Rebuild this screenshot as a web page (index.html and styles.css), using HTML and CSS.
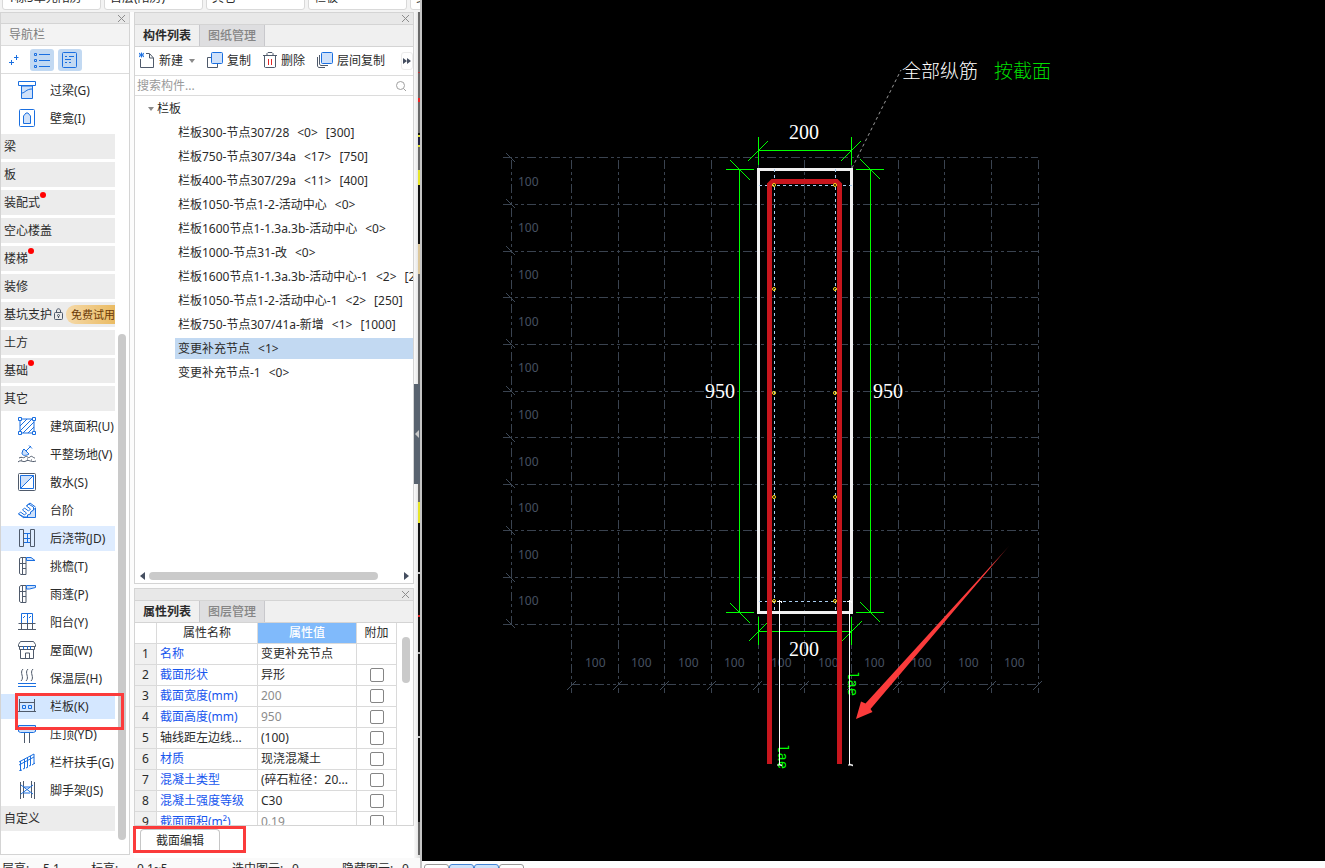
FILE: index.html
```
<!DOCTYPE html>
<html lang="zh-CN">
<head>
<meta charset="utf-8">
<title>栏板 - 截面编辑</title>
<link rel="stylesheet" href="styles.css">
</head>
<body>
<div class="app">
  <div class="side">
    <div class="topbar">
      <select class="pick" aria-label="单元"><option>1栋5单元阳房</option></select>
      <select class="pick" aria-label="楼层"><option>首层(阳房)</option></select>
      <select class="pick" aria-label="类别"><option>其它</option></select>
      <select class="pick" aria-label="构件类型"><option>栏板</option></select>
      <select class="pick" aria-label="构件"><option>变更补充节点</option></select>
    </div>
    <div class="panels">
      <nav class="panel nav">
        <div class="grip"><button class="close" aria-label="关闭"><svg width="9" height="9"><path d="M1 1l7 7M8 1l-7 7"/></svg></button></div>
        <h2 class="nav-title">导航栏</h2>
        <div class="nav-tools">
          <button class="tool plain" aria-label="添加"><svg width="18" height="18" class="b"><path d="M9 11.500H4M6.500 9v5M13.500 6.500H9M11.500 4v5"/></svg></button>
          <button class="tool on" aria-label="列表"><svg width="18" height="18" class="b"><path d="M6 3.500h11M6 9.500h11M6 15.500h11"/><path d="M1.500 2.500h2v2h-2zM1.500 8.500h2v2h-2zM1.500 14.500h2v2h-2z"/></svg></button>
          <button class="tool on" aria-label="卡片"><svg width="18" height="18" class="b"><rect x="1.500" y="1.500" width="14" height="15" rx="1"/><path d="M4 5.500h2M8 5.500h5M4 8.500h6M4 11.500h2M8 11.500h2"/></svg></button>
        </div>
        <div class="nav-body">
          <ul class="nav-list">
            <li class="item"><svg class="ico b" viewBox="0 0 18 18"><path class="f" d="M3.500 5v12.500h11V5z"/><path class="w" d="M.5.500h17v4H.5z"/><path d="M4 12c3 0 4-4 10-4"/></svg>过梁(G)</li>
            <li class="item"><svg class="ico b" viewBox="0 0 18 18"><rect x="1.500" y=".5" width="15" height="17" rx="1"/><path class="f" d="M5.500 14.500V7L8 4h2l2.500 3v7.500z"/></svg>壁龛(I)</li>
            <li class="group">梁</li>
            <li class="group">板</li>
            <li class="group">装配式<i class="dot"></i></li>
            <li class="group">空心楼盖</li>
            <li class="group">楼梯<i class="dot"></i></li>
            <li class="group">装修</li>
            <li class="group">基坑支护<svg class="lock" width="13" height="13" viewBox="0 0 13 13"><rect x="2.500" y="4.500" width="8" height="7" rx="1"/><path d="M4.500 4.500V3c0-3 4-3 4 0v1.500M6.500 8v2"/><circle cx="6.500" cy="7.500" r="1"/></svg><span class="trial">免费试用</span></li>
            <li class="group">土方</li>
            <li class="group">基础<i class="dot"></i></li>
            <li class="group">其它</li>
            <li class="item"><svg class="ico b" viewBox="0 0 18 18"><path d="M2 2h14v14H2zM2 9l7-7M2 14L14 2M5 16L16 5M10 16l6-6"/><path class="w" d="M.5.500h3v3h-3zM14.500.500h3v3h-3zM.5 14.500h3v3h-3zM14.500 14.500h3v3h-3z"/></svg>建筑面积(U)</li>
            <li class="item"><svg class="ico" viewBox="0 0 18 18"><path class="b f" d="M5 5L4 8c0 3 4 3 7 1L6 4z"/><path class="b" d="M8 6l5-5M11 .5l3 3"/><path class="g" d="M1 13c3-2 4 1 6-1s3 2 5 0 3 1 5 1M0 17c3-3 5 1 8-1s5 2 10 0M3 15h1M9 14h1M13 15h1"/></svg>平整场地(V)</li>
            <li class="item"><svg class="ico" viewBox="0 0 18 18"><rect class="g" x=".5" y=".5" width="17" height="17" rx="1"/><path class="b f" d="M2.500 15.500v-13h13z"/><path class="b w" d="M2.500 15.500h13v-13z"/></svg>散水(S)</li>
            <li class="item"><svg class="ico b" viewBox="0 0 18 18"><path class="f" d="M6 16.500h11.500V7L13 11h-2l-1 3H7z"/><path class="w" d="M.5 13l2-2 4 3 2-2-4-3 2-2 4 3 2-2-4-3 2-2 5 3v3l-3 2v2l-3 1v2H6z"/><path d="M.5 13L6 17M8.500 5L12 2l5.500 4"/></svg>台阶</li>
            <li class="item hover"><svg class="ico" viewBox="0 0 18 18"><path class="g" d="M1.500.500h4v17h-4zM12.500.500h4v17h-4z"/><path class="b" d="M6 4.500h6M6 9.500h6M6 13.500h6M9.500 4v10"/></svg>后浇带(JD)</li>
            <li class="item"><svg class="ico" viewBox="0 0 18 18"><path class="g" d="M1.500 1.500L3 .5h5v17H3l-1.500-1zM4.500 1v16M1.500 6.500H8M4.500 11.500H8"/><path class="b f" d="M8.500.500H13l4 3H8.500z"/></svg>挑檐(T)</li>
            <li class="item"><svg class="ico" viewBox="0 0 18 18"><path class="g" d="M1.500 1.500L3 .5h5v17H3l-1.500-1zM4.500 1v16M1.500 6.500H8M4.500 11.500H8"/><path class="b f" d="M8.500.500h9v2l-6 1.500h-3z"/></svg>雨蓬(P)</li>
            <li class="item"><svg class="ico" viewBox="0 0 18 18"><path class="b" d="M3.500 10V.500h11V10M9.500.500V10M5 5l2-2M11 5l2-2"/><path class="g" d="M.5 10.500h17M3.500 11v6M9.500 11v6M14.500 11v6M0 16.500h18"/></svg>阳台(Y)</li>
            <li class="item"><svg class="ico" viewBox="0 0 18 18"><path class="g" d="M2.500.500h13l2 3v2h-17v-2zM1.500 6v2.500h15V6M2.500 9v8.500h13V9M7.500 17v-5h4v5"/><path class="b" d="M5.500 5v3M9.500 5v3M12.500 5v3"/></svg>屋面(W)</li>
            <li class="item"><svg class="ico" viewBox="0 0 18 18"><path class="g" d="M5 0C1 4 7 8 3 12M10 0C6 4 12 8 8 12M15 0c-4 4 2 8-2 12"/><path class="b" d="M0 14.500h18M0 17.500h18"/></svg>保温层(H)</li>
            <li class="item current"><svg class="ico" viewBox="0 0 18 18"><path class="g" d="M1.500 2v12M16.500 2v12M2 5.500h14M0 14.500h18"/><path class="b" d="M4.500 8.500h3v3h-3zM10.500 8.500h3v3h-3z"/></svg>栏板(K)</li>
            <li class="item"><svg class="ico" viewBox="0 0 18 18"><path class="g" d="M6.500 8v10M11.500 8v10"/><path class="b f" d="M.5.500h17v6l-2 1h-13l-2-1z"/></svg>压顶(YD)</li>
            <li class="item"><svg class="ico b" viewBox="0 0 18 18"><path d="M1 9L16 1v10M1 12L16 4M2.500 8v10M6.500 6v9M9.500 5v9M12.500 3v9M1 18l3-1M5 16l2-1M8 15l2-1M11 13l2-1M14 12l3-2"/></svg>栏杆扶手(G)</li>
            <li class="item"><svg class="ico" viewBox="0 0 18 18"><path class="g" d="M2.500 1v17M5.500 0v17M13.500 0v17M16.500 1v17"/><path class="b" d="M3 4l12 9M3 13l12-9M6 6h6M6 12h6"/></svg>脚手架(JS)</li>
            <li class="group">自定义</li>
          </ul>
          <div class="nav-scroll"></div>
        </div>
        <div class="mark mark-nav"></div>
      </nav>

      <div class="stack">
        <section class="panel comps">
          <div class="grip"><button class="close" aria-label="关闭"><svg width="9" height="9"><path d="M1 1l7 7M8 1l-7 7"/></svg></button></div>
          <div class="tabs"><button class="tab active">构件列表</button><button class="tab">图纸管理</button></div>
          <div class="toolbar">
            <button class="act"><svg width="16" height="16"><path class="g" d="M1.500 7v8.500h13V6l-4-4.500H7M10.500 2v4h4"/><path class="b" d="M0 1l5 4M5 1L0 5M2.500 .500v5M0 3h5"/></svg>新建<span class="caret"></span></button>
            <button class="act"><svg width="16" height="16"><path class="g" d="M4 5.500H.5v10h10V12"/><rect class="b f" x="4.500" y=".5" width="11" height="11" rx="1"/></svg>复制</button>
            <button class="act"><svg width="14" height="16"><path class="g" d="M0 3.500h14M4 3V1.500L5 .5h4l1 1V3M1.500 4v11l1 .5h9l1-.5V4"/><path class="r" d="M5.500 7v6M8.500 7v6"/></svg>删除</button>
            <button class="act"><svg width="16" height="16"><path class="g" d="M.5 5v9l1 1.500H8M2.500 3v9l1 1.500H11"/><rect class="b f" x="4.500" y=".5" width="11" height="11" rx="1"/></svg>层间复制</button>
            <button class="more" aria-label="更多"><svg width="8" height="6"><path d="M0 0l4 3-4 3zM4 0l4 3-4 3z"/></svg></button>
          </div>
          <div class="search"><input type="text" placeholder="搜索构件..." aria-label="搜索构件"><svg width="12" height="12"><circle cx="5.500" cy="5.500" r="4"/><path d="M8.500 8.500L11 11"/></svg></div>
          <ul class="tree">
            <li class="root"><span class="caret"></span>栏板</li>
            <li><span>栏板300-节点307/28</span><span>&lt;0&gt;</span><span>[300]</span></li>
            <li><span>栏板750-节点307/34a</span><span>&lt;17&gt;</span><span>[750]</span></li>
            <li><span>栏板400-节点307/29a</span><span>&lt;11&gt;</span><span>[400]</span></li>
            <li><span>栏板1050-节点1-2-活动中心</span><span>&lt;0&gt;</span></li>
            <li><span>栏板1600节点1-1.3a.3b-活动中心</span><span>&lt;0&gt;</span></li>
            <li><span>栏板1000-节点31-改</span><span>&lt;0&gt;</span></li>
            <li><span>栏板1600节点1-1.3a.3b-活动中心-1</span><span>&lt;2&gt;</span><span>[250]</span></li>
            <li><span>栏板1050-节点1-2-活动中心-1</span><span>&lt;2&gt;</span><span>[250]</span></li>
            <li><span>栏板750-节点307/41a-新增</span><span>&lt;1&gt;</span><span>[1000]</span></li>
            <li class="sel"><span>变更补充节点</span><span>&lt;1&gt;</span></li>
            <li><span>变更补充节点-1</span><span>&lt;0&gt;</span></li>
          </ul>
          <div class="hscroll"><svg width="5" height="8"><path d="M5 0v8L0 4z"/></svg><div class="track"><div class="thumb"></div></div><svg width="5" height="8"><path d="M0 0v8l5-4z"/></svg></div>
        </section>

        <section class="panel props">
          <div class="grip"><button class="close" aria-label="关闭"><svg width="9" height="9"><path d="M1 1l7 7M8 1l-7 7"/></svg></button></div>
          <div class="tabs"><button class="tab active">属性列表</button><button class="tab">图层管理</button></div>
          <div class="sheet">
            <table>
              <colgroup><col class="c1"><col class="c2"><col class="c3"><col class="c4"></colgroup>
              <thead><tr><th></th><th>属性名称</th><th class="hot">属性值</th><th>附加</th></tr></thead>
              <tbody>
                <tr><th>1</th><td class="link">名称</td><td>变更补充节点</td><td></td></tr>
                <tr><th>2</th><td class="link">截面形状</td><td>异形</td><td><input type="checkbox" aria-label="附加 截面形状"></td></tr>
                <tr><th>3</th><td class="link">截面宽度(mm)</td><td class="dim">200</td><td><input type="checkbox" aria-label="附加 截面宽度"></td></tr>
                <tr><th>4</th><td class="link">截面高度(mm)</td><td class="dim">950</td><td><input type="checkbox" aria-label="附加 截面高度"></td></tr>
                <tr><th>5</th><td>轴线距左边线...</td><td>(100)</td><td><input type="checkbox" aria-label="附加 轴线距左边线"></td></tr>
                <tr><th>6</th><td class="link">材质</td><td>现浇混凝土</td><td><input type="checkbox" aria-label="附加 材质"></td></tr>
                <tr><th>7</th><td class="link">混凝土类型</td><td>(碎石粒径：20...</td><td><input type="checkbox" aria-label="附加 混凝土类型"></td></tr>
                <tr><th>8</th><td class="link">混凝土强度等级</td><td>C30</td><td><input type="checkbox" aria-label="附加 混凝土强度等级"></td></tr>
                <tr><th>9</th><td class="link">截面面积(m²)</td><td class="dim">0.19</td><td><input type="checkbox" aria-label="附加 截面面积"></td></tr>
              </tbody>
            </table>
            <div class="vscroll"></div>
          </div>
        </section>
        <div class="foot"><button class="edit">截面编辑</button><div class="mark mark-foot"></div></div>
      </div>
      <div class="gutter"><div class="handle"></div><div class="sliver"></div></div>
    </div>
    <div class="status">
      <span>层高:</span><span>5.1</span><span>标高:</span><span>0.1~5</span><span>选中图元:</span><span>0</span><span>隐藏图元:</span><span>0</span>
    </div>
  </div>

  <main class="view">
    <svg class="cad" viewBox="422 0 903 861" preserveAspectRatio="xMinYMin meet">
      <defs><linearGradient id="fade" gradientUnits="userSpaceOnUse" x1="1010" y1="545" x2="990" y2="567"><stop offset="0" stop-color="#fb3b3b" stop-opacity=".3"/><stop offset="1" stop-color="#fb3b3b"/></linearGradient></defs>
      <path class="grid" d="M571.500 160V693M618.500 160V693M664.500 160V693M711.500 160V693M758.500 160V693M804.500 160V693M851.500 160V693M898.500 160V693M944.500 160V693M991.500 160V693M1038.500 160V693M511.500 160V624M503 157.500H1038M503 204.500H1038M503 251.500H1038M503 297.500H1038M503 344.500H1038M503 391.500H1038M503 437.500H1038M503 484.500H1038M503 530.500H1038M503 577.500H1038M503 624.500H1038M571 684.500H1038"/>
      <path class="tick" d="M506 153l9 9M506 199l9 9M506 246l9 9M506 293l9 9M506 339l9 9M506 386l9 9M506 433l9 9M506 479l9 9M506 526l9 9M506 573l9 9M506 619l9 9M567 690l9-9M613 690l9-9M660 690l9-9M707 690l9-9M753 690l9-9M800 690l9-9M847 690l9-9M893 690l9-9M940 690l9-9M987 690l9-9M1033 690l9-9"/>
      <g class="unit">
        <text x="518" y="186">100</text><text x="518" y="232">100</text><text x="518" y="279">100</text><text x="518" y="326">100</text><text x="518" y="372">100</text><text x="518" y="419">100</text><text x="518" y="466">100</text><text x="518" y="512">100</text><text x="518" y="559">100</text><text x="518" y="605">100</text>
        <text x="585" y="667">100</text><text x="631" y="667">100</text><text x="678" y="667">100</text><text x="724" y="667">100</text><text x="771" y="667">100</text><text x="818" y="667">100</text><text x="864" y="667">100</text><text x="911" y="667">100</text><text x="958" y="667">100</text><text x="1004" y="667">100</text>
      </g>
      <path class="leader" d="M852 168L901 70"/>
      <path class="dimline" d="M758.500 150.500H851.500M758.500 137V165M851.500 137V165M748 161l20-20M841 161l20-20M739.500 169V612M726 169.500h28M726 612.500h28M730 160l20 20M730 603l20 20M870.500 169V612M856 169.500h28M856 612.500h28M860 159l20 20M860 602l20 20M758.500 631.500H851.500M758.500 617v28M851.500 617v28M749 641l20-20M842 641l20-20"/>
      <rect class="outline" x="758.500" y="169.500" width="93" height="443"/>
      <path class="cover" d="M774.500 169V612M835.500 169V612M759 185.500H852M759 601.500H852"/>
      <path class="rebar" d="M769.500 764V184.500l3-3h64l3 3V764"/>
      <g class="pt"><circle cx="774" cy="185" r="1.500"/><circle cx="774" cy="289" r="1.500"/><circle cx="774" cy="393" r="1.500"/><circle cx="774" cy="497" r="1.500"/><circle cx="774" cy="601" r="1.500"/><circle cx="835" cy="185" r="1.500"/><circle cx="835" cy="289" r="1.500"/><circle cx="835" cy="393" r="1.500"/><circle cx="835" cy="497" r="1.500"/><circle cx="835" cy="601" r="1.500"/></g>
      <g class="lae"><text transform="translate(778 744) rotate(90)">lae</text><text transform="translate(848 671) rotate(90)">lae</text></g>
      <path class="anchor" d="M779.500 601V765M849.500 601V765M777 601.500h5M847 601.500h5M777 765h5M848 765h5M779 600l3 3M849 600l3 3M779 764l3 2M850 764l3 2"/>
      <g class="size"><text x="789" y="139">200</text><text x="789" y="656">200</text><text x="705" y="398">950</text><text x="873" y="398">950</text></g>
      <text class="note" x="902" y="78">全部纵筋</text><text class="note green" x="994" y="78">按截面</text>
      <path fill="url(#fade)" d="M856 719L861 701.500 865.500 703.500 1009.500 545.500 870.500 709 872.500 712z"/>
    </svg>
    <div class="dock"><button aria-label="工具一"></button><button class="on" aria-label="工具二"></button><button class="on" aria-label="工具三"></button><button aria-label="工具四"></button></div>
  </main>
</div>
</body>
</html>
```
FILE: styles.css
```
* { box-sizing: border-box; }
body { margin: 0; font: 12px/18px "Noto Sans", "Noto Sans CJK SC", sans-serif; color: #2b2b2b; background: #fafafa; }
button, input, select { font: inherit; color: inherit; margin: 0; padding: 0; border: 0; background: none; }
ul { list-style: none; margin: 0; padding: 0; }
svg { display: block; flex: none; }
.app { display: flex; height: 100vh; overflow: hidden; }

.side { flex: none; width: 422px; display: flex; flex-direction: column; border-right: 2px solid #c4c4c4; background: #fcfcfc; }
.topbar { display: flex; align-items: flex-end; gap: 3px; height: 12px; padding: 0 0 2px 2px; overflow: hidden; background: #f3f3f3; }
.pick { flex: none; width: 99px; height: 24px; padding: 0 5px; appearance: none; background: #fff; border: 1px solid #d9d9d9; border-radius: 3px; }
.panels { flex: 1; display: flex; min-height: 0; }
.status { display: flex; height: 10px; padding-left: 2px; overflow: hidden; white-space: nowrap; background: #fafafa; }
.status span { flex: none; line-height: 22px; width: 48px; }
.status span:nth-child(1) { width: 41px; }
.status span:nth-child(3) { width: 46px; }
.status span:nth-child(4) { width: 95px; }
.status span:nth-child(5) { width: 60px; }
.status span:nth-child(6) { width: 50px; }
.status span:nth-child(7) { width: 60px; }
.status span:nth-child(8) { width: 12px; }

.panel { border: 1px solid #d4d4d4; background: #fff; display: flex; flex-direction: column; min-height: 0; }
.grip { flex: none; height: 11px; display: flex; justify-content: flex-end; align-items: center; padding-right: 3px; background: #e8e8e8; border-bottom: 1px solid #d4d4d4; }
.stack .grip { height: 12px; }
.close { display: flex; }
.close path { stroke: #8c8c8c; fill: none; }

.nav { position: relative; width: 130px; margin-bottom: 3px; }
.nav-title { flex: none; height: 22px; margin: 0; padding-left: 8px; font-size: 12px; line-height: 22px; font-weight: 400; color: #7d7d7d; background: #f3f3f3; border-bottom: 1px solid #dcdcdc; }
.nav-tools { flex: none; display: flex; gap: 4px; align-items: center; height: 28px; padding-left: 1px; border-bottom: 1px solid #dcdcdc; }
.tool { width: 24px; height: 22px; display: flex; align-items: center; justify-content: center; border-radius: 3px; }
.tool.on { background: #c2d9f2; }
.nav-body { flex: 1; display: flex; min-height: 0; overflow: hidden; justify-content: space-between; padding-right: 3px; }
.nav-list { width: 114px; display: flex; flex-direction: column; gap: 3px; padding-top: 4px; overflow: hidden; }
.nav-list li { flex: none; display: flex; align-items: center; height: 25px; white-space: nowrap; }
.group { padding-left: 3px; background: #ececec; }
.item { padding-left: 17px; gap: 14px; }
.item.hover { background: #deecff; }
.item.current { background: #d4e7ff; }
.ico { width: 18px; height: 18px; margin-bottom: 1px; }
.b { stroke: #1a6fe0; fill: none; }
.g { stroke: #4f5a6b; fill: none; }
.r { stroke: #e02828; fill: none; }
.f { fill: #cfe1fa; }
.w { fill: #fff; }
.dot { width: 6px; height: 6px; margin-bottom: 15px; border-radius: 3px; background: #f00; }
.lock { stroke: #4f5a6b; fill: none; }
.trial { flex: none; margin-left: 1px; height: 19px; padding: 0 5px; border-radius: 9px 0 0 9px; line-height: 19px; font-size: 11px; color: #6b3a08; background: linear-gradient(90deg, #f5d9a8, #e9b85c); }
.nav-scroll { width: 8px; margin: 260px 0 14px; border-radius: 4px; background: #cacaca; }
.mark { position: absolute; border: 3px solid #fb3b3b; }
.mark-nav { left: 14px; top: 680px; width: 109px; height: 37px; }

.stack { width: 280px; margin-left: 4px; display: flex; flex-direction: column; min-height: 0; }
.comps { flex: 1; }
.props { margin-top: 4px; height: 238px; }
.tabs { flex: none; display: flex; height: 22px; background: #f0f0f0; border-bottom: 1px solid #d4d4d4; }
.tab { width: 65px; border-right: 1px solid #c8c8cc; color: #858585; background: #dedee0; font-weight: 500; }
.tab.active { color: #2b2b2b; background: #f0f0f0; font-weight: 700; }
.toolbar { flex: none; display: flex; align-items: center; gap: 12px; height: 29px; padding-left: 4px; border-bottom: 1px solid #dcdcdc; }
.act { flex: none; display: flex; align-items: center; gap: 4px; }
.act svg { margin-bottom: 2px; }
.caret { border: 3px solid transparent; border-top: 4px solid #8a8a8a; border-bottom: 0; margin-left: 2px; }
.more { margin-left: auto; width: 12px; height: 18px; display: flex; align-items: center; justify-content: center; border: 1px solid #ececec; border-radius: 3px; }
.more svg, .hscroll svg { fill: #454e60; }
.search { flex: none; display: flex; align-items: center; height: 20px; padding: 0 6px 0 2px; border-bottom: 1px solid #dcdcdc; }
.search input { flex: 1; min-width: 0; height: 18px; outline: 0; }
.search input::placeholder { color: #9a9a9a; }
.search svg { stroke: #a0a0a0; stroke-width: 1; fill: none; }
.tree { flex: 1; min-height: 0; padding-top: 2px; overflow: hidden; }
.tree li { display: flex; align-items: center; gap: 8px; height: 21px; margin: 0 0 3px 40px; padding-left: 3px; white-space: nowrap; }
.tree li span { flex: none; }
.tree .root { margin-left: 8px; gap: 3px; }
.tree .sel { background: #c2d9f2; }
.hscroll { flex: none; display: flex; align-items: center; justify-content: space-between; height: 14px; padding: 0 4px 0 5px; }
.track { flex: 1; padding: 0 26px 0 4px; }
.thumb { height: 8px; border-radius: 4px; background: #cacaca; }

.sheet { flex: 1; min-height: 0; overflow: hidden; display: flex; justify-content: space-between; align-items: flex-start; }
table { width: 262px; table-layout: fixed; border-collapse: separate; border-spacing: 0; }
.c1 { width: 22px; } .c2 { width: 101px; } .c3 { width: 99px; } .c4 { width: 40px; }
tr { height: 21px; }
th, td { height: 21px; padding: 0 3px; border: 0 solid #dadada; border-width: 0 1px 1px 0; font-weight: 400; line-height: 18px; white-space: nowrap; overflow: hidden; text-align: left; }
th { text-align: center; }
tbody th { background: #f0f0f0; }
.hot { color: #fff; background: #80bafb; font-weight: 500; }
.link { color: #1756ee; }
.dim { color: #8c8c8c; }
td input { display: block; appearance: none; width: 14px; height: 14px; margin: 0 auto; border: 1px solid #858585; border-radius: 2px; background: #fff; }
.vscroll { width: 8px; height: 46px; margin: 14px 3px 0 0; border-radius: 4px; background: #cacaca; }
.foot { flex: none; position: relative; height: 32px; padding: 3px 0 0 6px; background: #fff; }
.edit { width: 80px; height: 22px; border: 1px solid #c6c6c6; border-bottom: 0; border-radius: 4px 4px 0 0; }
.mark-foot { left: -1px; top: 0; width: 113px; height: 27px; }

.gutter { flex: 1; display: flex; position: relative; background: linear-gradient(90deg, #fafafa, #dcdcdc); justify-content: flex-end; }
.sliver { width: 2px; margin-bottom: 3px; background: linear-gradient(180deg, #696969 0 60px, #b33 60px 61px, #696969 61px 86px, #e22 86px 90px, #696969 90px 121px, #111 121px 123px, #dd3 123px 125px, #224 125px 133px, #dd3 133px 135px, #696969 135px 158px, #e6e62a 158px 173px, #111 173px 232px, #dcc79c 232px 262px, #696969 262px 490px, #e6e62a 490px 511px, #111 511px 560px, #ccc 560px 562px, #111 562px 603px, #d22 603px 605px, #111 605px 640px, #bbb 640px 642px, #111 642px 724px, #ccc 724px 726px, #111 726px 810px, #666 810px); }
.handle { position: absolute; left: 0; top: 372px; width: 6px; height: 100px; background: #59636f; }
.handle::after { content: ""; position: absolute; left: 1px; top: 46px; border: 4px solid transparent; border-right: 4px solid #c8c8c8; border-left: 0; }

.view { flex: 1; min-width: 0; display: flex; flex-direction: column; background: #000; }
.cad { flex: 1; width: 100%; min-height: 0; fill: none; }
.grid { stroke: #3a4350; stroke-dasharray: 9 3 3 3 3 3; }
.tick { stroke: #3f4a58; }
.unit { fill: #465161; font-size: 12px; }
.leader { stroke: #9a9a9a; stroke-dasharray: 3 3; }
.dimline { stroke: #0f0; }
.outline { stroke: #f0f0f0; stroke-width: 3; }
.cover { stroke: #a9cdf0; stroke-dasharray: 3 3; }
.rebar { stroke: #c8161d; stroke-width: 5; }
.pt { stroke: #ffd91a; }
.lae { fill: #0f0; font: 14px "Liberation Mono", monospace; }
.anchor { stroke: #fff; }
.size { fill: #fff; font: 20px "Liberation Serif", serif; }
.note { fill: #fff; font: 300 19px "Liberation Serif", "Noto Sans CJK SC", serif; }
.green { fill: #0d0; }
.dock { flex: none; display: flex; height: 7px; padding: 3px 0 0 2px; overflow: hidden; background: #fdfdfd; }
.dock button { width: 25px; height: 20px; border: 1px solid #999; border-radius: 3px; background: #fff; }
.dock .on { border-color: #4585d6; background: #cfe3fb; }
```
